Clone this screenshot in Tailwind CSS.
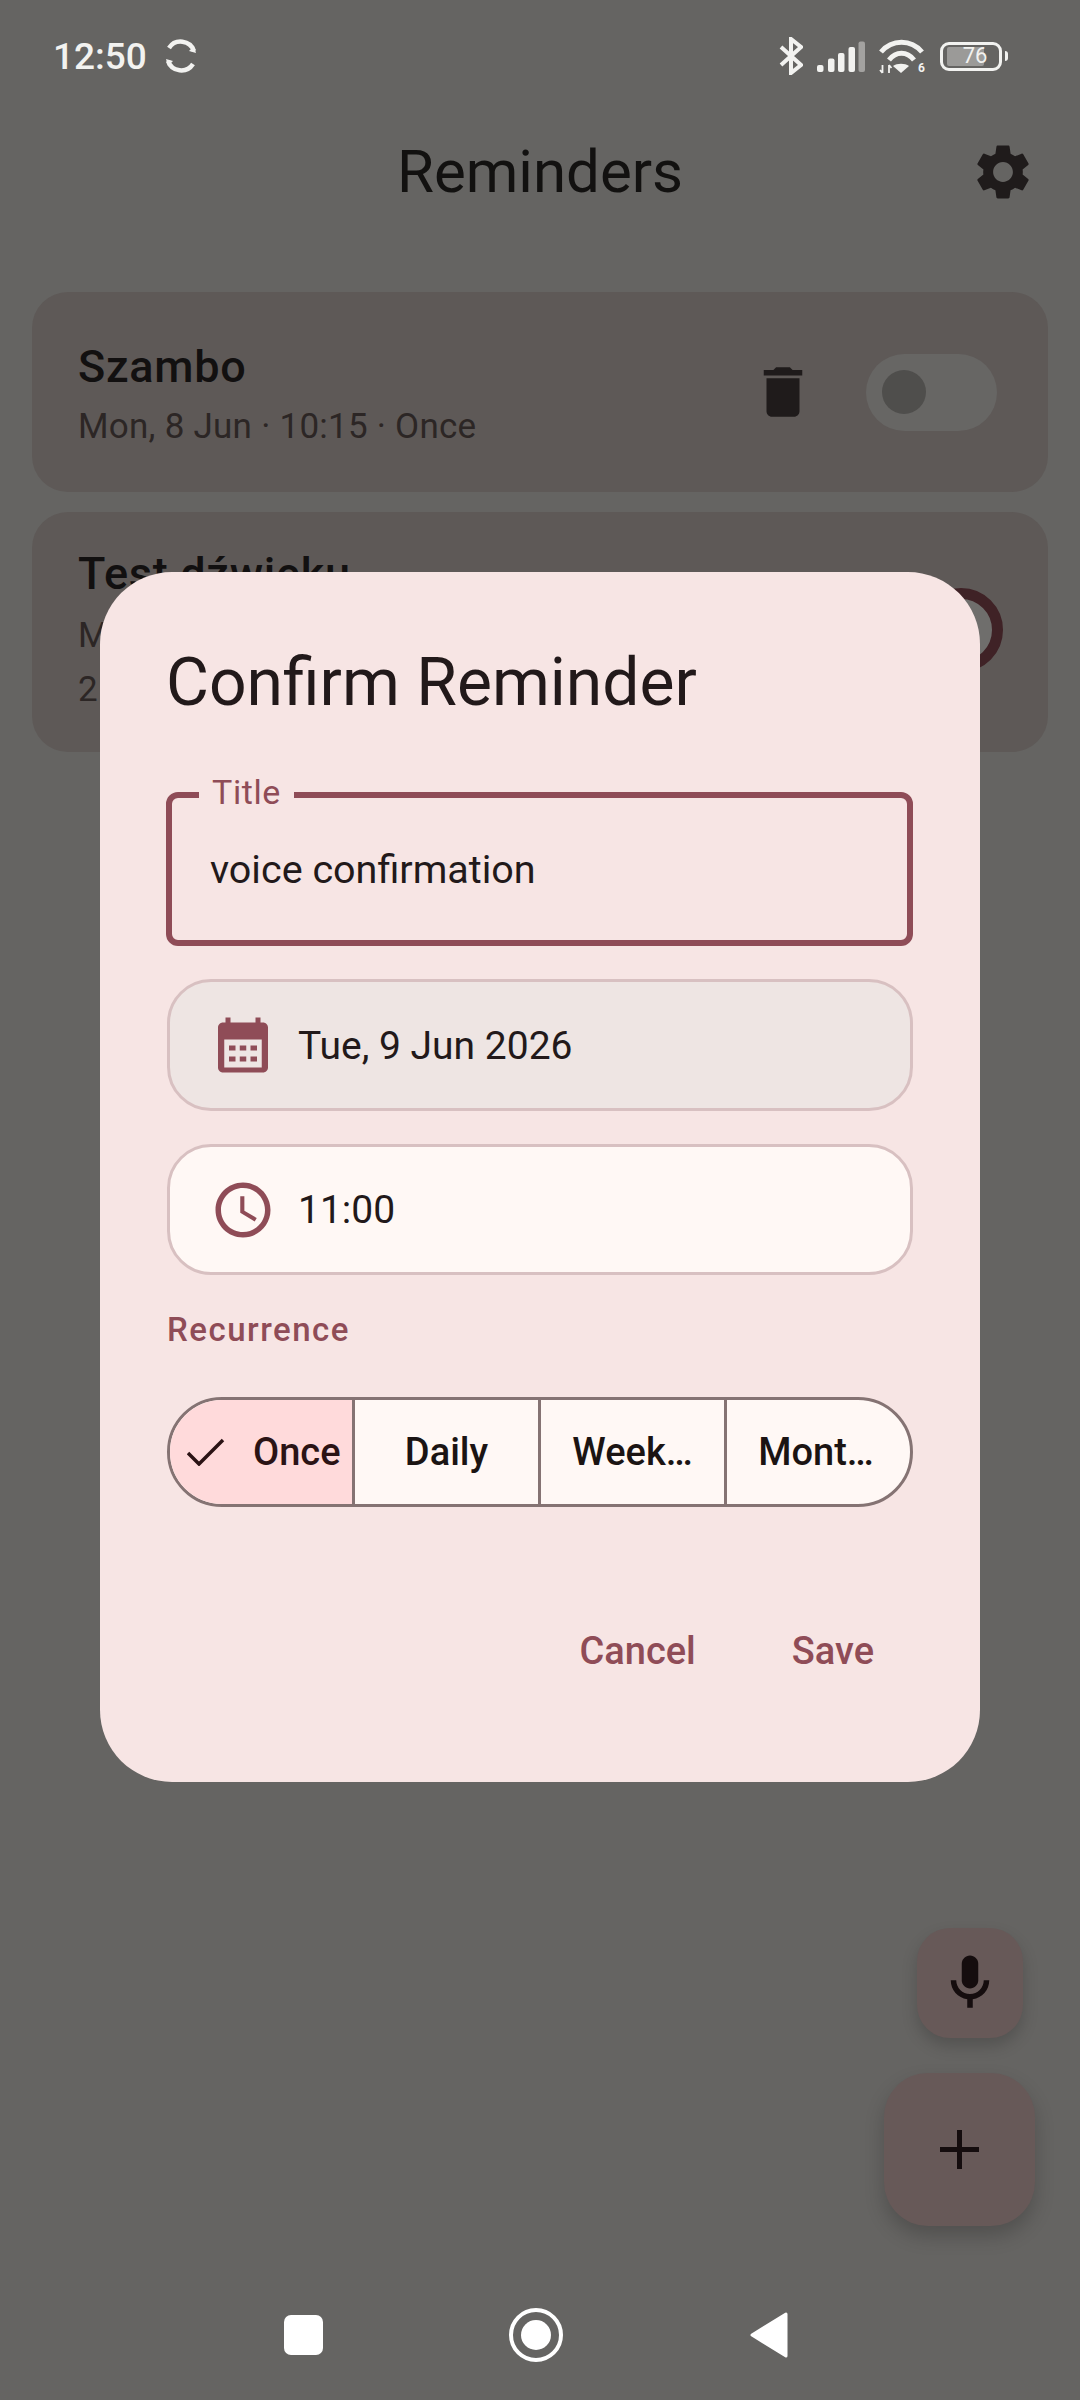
<!DOCTYPE html>
<html lang="en">
  <head>
    <meta charset="UTF-8" />
    <meta name="viewport" content="width=device-width, initial-scale=1.0" />
    <title>Reminders</title>
    <script src="https://cdn.jsdelivr.net/npm/@tailwindcss/browser@4"></script>
  </head>
  <body class="bg-[#656462] font-['Roboto',sans-serif]">
    <div class="relative w-[1080px] h-[2400px] overflow-hidden flex flex-col">

      <!-- Status bar -->
      <div class="h-[112px] shrink-0 flex items-center pl-[53px] pr-[72px] text-[#f2f2f0]">
        <span class="text-[37px] font-medium leading-none">12:50</span>
        <svg class="ml-[17px] w-[34px] h-[34px]" viewBox="0 0 34 34" fill="none" stroke="#f2f2f0" stroke-width="4.5">
          <path d="M30 12A14 14 0 0 0 5 9" />
          <path d="M4 22A14 14 0 0 0 29 25" />
          <path d="M32 14l-7-2 5-5z" fill="#f2f2f0" stroke="none" />
          <path d="M2 20l7 2-5 5z" fill="#f2f2f0" stroke="none" />
        </svg>
        <div class="ml-auto flex items-center">
          <svg class="w-[24px] h-[38px]" viewBox="0 0 24 38" fill="none" stroke="#f2f2f0" stroke-width="4">
            <path d="M2 10l20 18-10 8V2l10 8L2 28" />
          </svg>
          <svg class="ml-[14px] w-[48px] h-[31px]" viewBox="0 0 48 31" fill="#f2f2f0">
            <rect x="0" y="24" width="6.500" height="7" rx="2" />
            <rect x="11" y="17.500" width="6.500" height="13.500" rx="2" />
            <rect x="21" y="12" width="6.500" height="19" rx="2" />
            <rect x="31.500" y="6" width="6.500" height="25" rx="2" />
            <rect x="41.500" y="0.500" width="6.500" height="30.500" rx="2" fill="#a3a2a0" />
          </svg>
          <div class="relative ml-[14px] w-[46px] h-[35px]">
            <svg class="w-[46px] h-[35px]" viewBox="0 0 46 35" fill="none" stroke="#f2f2f0" stroke-width="5">
              <path d="M2 13C13 0 32 0 43 13" />
              <path d="M10 21C17 12 28 12 35 21" />
              <path d="M22 34l-8-7c4-3 12-3 16 0z" fill="#f2f2f0" stroke="none" />
              <path d="M3.500 26v8M1 31l2.500 3M10 34v-8M10 26l2.500 3" stroke-width="1.800" />
            </svg>
            <span class="absolute right-[0px] bottom-[0px] text-[12px] font-bold leading-[12px]">6</span>
          </div>
          <div class="ml-[15px] flex items-center">
            <div class="relative w-[62px] h-[29px] rounded-[9px] border-[3px] border-[#f2f2f0] flex items-center justify-center">
              <div class="absolute left-[4px] top-[2px] bottom-[2px] w-[37px] bg-[#9b9a98] rounded-[2px]"></div>
              <span class="relative ml-[8px] text-[22px] leading-none text-[#f2f2f0]">76</span>
            </div>
            <div class="ml-[3px] w-[3px] h-[10px] rounded-r bg-[#f2f2f0]"></div>
          </div>
        </div>
      </div>

      <!-- App bar -->
      <div class="relative h-[120px] shrink-0 flex items-center justify-center">
        <h1 class="text-[60px] leading-none text-[#121110]">Reminders</h1>
        <svg class="absolute left-[970px] top-[27px] w-[66px] h-[66px]" viewBox="0 0 24 24" fill="#1f1b1b">
          <path d="M19.140 12.940c.04-.3.060-.61.060-.94 0-.32-.02-.64-.07-.94l2.030-1.580c.18-.14.23-.41.120-.61l-1.920-3.320c-.12-.22-.37-.29-.59-.22l-2.390.96c-.5-.38-1.030-.7-1.620-.94l-.36-2.540c-.04-.24-.24-.41-.48-.41h-3.840c-.24 0-.43.170-.47.410l-.36 2.540c-.59.24-1.130.57-1.620.94l-2.390-.96c-.22-.08-.47 0-.59.220L2.740 8.870c-.12.21-.08.47.120.61l2.030 1.580c-.05.3-.09.63-.09.94s.02.64.07.94l-2.030 1.580c-.18.14-.23.41-.12.61l1.920 3.320c.12.22.37.29.59.22l2.390-.96c.5.38 1.030.7 1.620.94l.36 2.540c.05.24.24.41.48.41h3.840c.24 0 .44-.17.47-.41l.36-2.540c.59-.24 1.130-.56 1.620-.94l2.390.96c.22.08.47 0 .59-.22l1.920-3.320c.12-.22.07-.47-.12-.61l-2.010-1.580zM12 15.600c-1.980 0-3.600-1.620-3.600-3.600s1.620-3.600 3.600-3.600 3.600 1.620 3.600 3.600-1.620 3.600-3.600 3.600z" />
        </svg>
      </div>

      <!-- Reminder list -->
      <div class="mt-[60px] px-[32px] flex flex-col gap-[20px]">
        <div class="h-[200px] rounded-[36px] bg-[#5e5957] pl-[46px] pr-[51px] flex items-center">
          <div class="flex-1 pt-[6px]">
            <div class="text-[45px] font-medium leading-[52px] tracking-[0.7px] text-[#121010]">Szambo</div>
            <div class="mt-[12px] text-[35px] leading-[44px] tracking-[0.25px] text-[#2c2625]">Mon, 8 Jun · 10:15 · Once</div>
          </div>
          <svg class="w-[66px] h-[66px]" viewBox="0 0 24 24" fill="#1f1b1b">
            <path d="M6 19c0 1.100.9 2 2 2h8c1.100 0 2-.9 2-2V7H6v12zM19 4h-3.500l-1-1h-5l-1 1H5v2h14V4z" />
          </svg>
          <div class="ml-[50px] w-[131px] h-[77px] rounded-full bg-[#676664] flex items-center pl-[16px]">
            <div class="w-[44px] h-[44px] rounded-full bg-[#4f4e4c]"></div>
          </div>
        </div>
        <div class="h-[240px] rounded-[36px] bg-[#5e5957] pl-[46px] pr-[45px] flex items-center">
          <div class="flex-1 w-[0px]">
            <div class="-mt-[4px] text-[45px] font-medium leading-[52px] tracking-[0.7px] text-[#121010]">Test dźwięku</div>
            <div class="mt-[14px] text-[35px] leading-[44px] tracking-[0.25px] text-[#2c2625]">Mon</div>
            <div class="mt-[10px] text-[35px] leading-[44px] tracking-[0.25px] text-[#2c2625]">25</div>
          </div>
          <div class="mb-[4px] w-[84px] h-[84px] rounded-full border-[11px] border-[#3f2226] bg-[#6f6e6c]"></div>
        </div>
      </div>

      <!-- FABs -->
      <div class="absolute left-[917px] top-[1928px] w-[106px] h-[110px] rounded-[33px] bg-[#675958] shadow-[0_8px_16px_rgba(0,0,0,0.18)] flex items-center justify-center">
        <svg class="w-[66px] h-[66px]" viewBox="0 0 24 24" fill="#150d0e">
          <path d="M12 14c1.660 0 3-1.340 3-3V5c0-1.660-1.340-3-3-3S9 3.340 9 5v6c0 1.660 1.340 3 3 3z" />
          <path d="M17 11c0 2.760-2.240 5-5 5s-5-2.240-5-5H5c0 3.530 2.610 6.430 6 6.920V21h2v-3.080c3.390-.49 6-3.390 6-6.920h-2z" />
        </svg>
      </div>
      <div class="absolute left-[884px] top-[2073px] w-[151px] h-[153px] rounded-[44px] bg-[#675958] shadow-[0_10px_20px_rgba(0,0,0,0.2)] flex items-center justify-center">
        <svg class="w-[39px] h-[39px]" viewBox="0 0 39 39" fill="#150d0e">
          <rect x="17" y="0" width="5" height="39" />
          <rect x="0" y="17" width="39" height="5" />
        </svg>
      </div>

      <!-- Navigation bar -->
      <div class="absolute left-0 right-0 top-[2308px] h-[54px]">
        <div class="absolute left-[284px] top-[7px] w-[39px] h-[40px] rounded-[7px] bg-white"></div>
        <div class="absolute left-[509px] top-0 w-[54px] h-[54px] rounded-full border-[4px] border-white flex items-center justify-center">
          <div class="w-[30px] h-[30px] rounded-full bg-white"></div>
        </div>
        <svg class="absolute left-[750px] top-[4px] w-[38px] h-[46px]" viewBox="0 0 38 46" fill="#fff" stroke="#fff" stroke-width="3" stroke-linejoin="round">
          <path d="M2 23L36 2v42z" />
        </svg>
      </div>

      <!-- Confirm dialog -->
      <div class="absolute left-[100px] top-[572px] w-[880px] h-[1210px] rounded-[72px] bg-[#f7e5e4] px-[67px] flex flex-col">
        <h2 class="mt-[75px] -ml-[1px] text-[66px] leading-[72px] text-[#22191a]">Confirm Reminder</h2>

        <div class="relative mt-[73px] -ml-[1px] h-[154px] rounded-[12px] border-[6px] border-[#8f4c57] flex items-center pl-[38px] pt-[2px]">
          <span class="absolute left-[27px] top-[-24px] px-[13px] bg-[#f7e5e4] text-[34px] leading-[36px] tracking-[0.6px] text-[#8f4c57]">Title</span>
          <span class="text-[39.500px] text-[#22191a]">voice confirmation</span>
        </div>

        <div class="mt-[33px] h-[132px] rounded-[44px] border-[3px] border-[#d8c0c1] bg-[#eee5e3] flex items-center pl-[43px]">
          <svg class="w-[60px] h-[60px]" viewBox="0 0 24 24" fill="#8f4c57">
            <path d="M20 3h-1V1h-2v2H7V1H5v2H4c-1.100 0-2 .9-2 2v16c0 1.100.9 2 2 2h16c1.100 0 2-.9 2-2V5c0-1.100-.9-2-2-2zm-.5 18h-15V9.800h15V21z" />
            <path d="M6.400 12.200H9v2H6.400zM10.700 12.200h2.600v2h-2.600zM15 12.200h2.600v2H15zM6.400 16.600H9v2H6.400zM10.700 16.600h2.600v2h-2.600zM15 16.600h2.600v2H15z" />
          </svg>
          <span class="ml-[25px] pt-[2px] text-[39px] text-[#22191a]">Tue, 9 Jun 2026</span>
        </div>

        <div class="mt-[33px] h-[131px] rounded-[44px] border-[3px] border-[#d8c0c1] bg-[#fff8f5] flex items-center pl-[40px]">
          <svg class="w-[66px] h-[66px]" viewBox="0 0 24 24" fill="#8f4c57">
            <path d="M11.990 2C6.470 2 2 6.480 2 12s4.470 10 9.990 10C17.520 22 22 17.520 22 12S17.520 2 11.990 2zM12 20c-4.420 0-8-3.580-8-8s3.580-8 8-8 8 3.580 8 8-3.580 8-8 8z" />
            <path d="M12.500 7H11v6l5.250 3.150.75-1.230-4.500-2.670z" />
          </svg>
          <span class="ml-[22px] pt-[2px] text-[39px] text-[#22191a]">11:00</span>
        </div>

        <div class="mt-[37px] text-[33px] font-medium leading-[36px] tracking-[1.5px] text-[#8f4c57]">Recurrence</div>

        <div class="mt-[49px] h-[110px] rounded-full border-[3px] border-[#857373] overflow-hidden flex bg-[#fff8f5] text-[38px] font-medium text-[#1b1413]">
          <div class="w-[185px] shrink-0 bg-[#ffdadb] border-r-[3px] border-[#857373] flex items-center pl-[17px] text-[#2b1315]">
            <svg class="w-[38px] h-[28px]" viewBox="0 0 38 28" fill="none" stroke="#2b1315" stroke-width="3.500">
              <path d="M1 15l11 11L36 2" />
            </svg>
            <span class="ml-[28px]">Once</span>
          </div>
          <div class="w-[186px] shrink-0 border-r-[3px] border-[#857373] flex items-center justify-center">Daily</div>
          <div class="w-[186px] shrink-0 border-r-[3px] border-[#857373] flex items-center justify-center">Week…</div>
          <div class="flex-1 flex items-center justify-center pr-[5px]">Mont…</div>
        </div>

        <div class="mt-[116px] flex justify-end pr-[39px] text-[38px] font-medium text-[#8f4c57]">
          <span>Cancel</span>
          <span class="ml-[96px]">Save</span>
        </div>
      </div>
    </div>
  </body>
</html>
